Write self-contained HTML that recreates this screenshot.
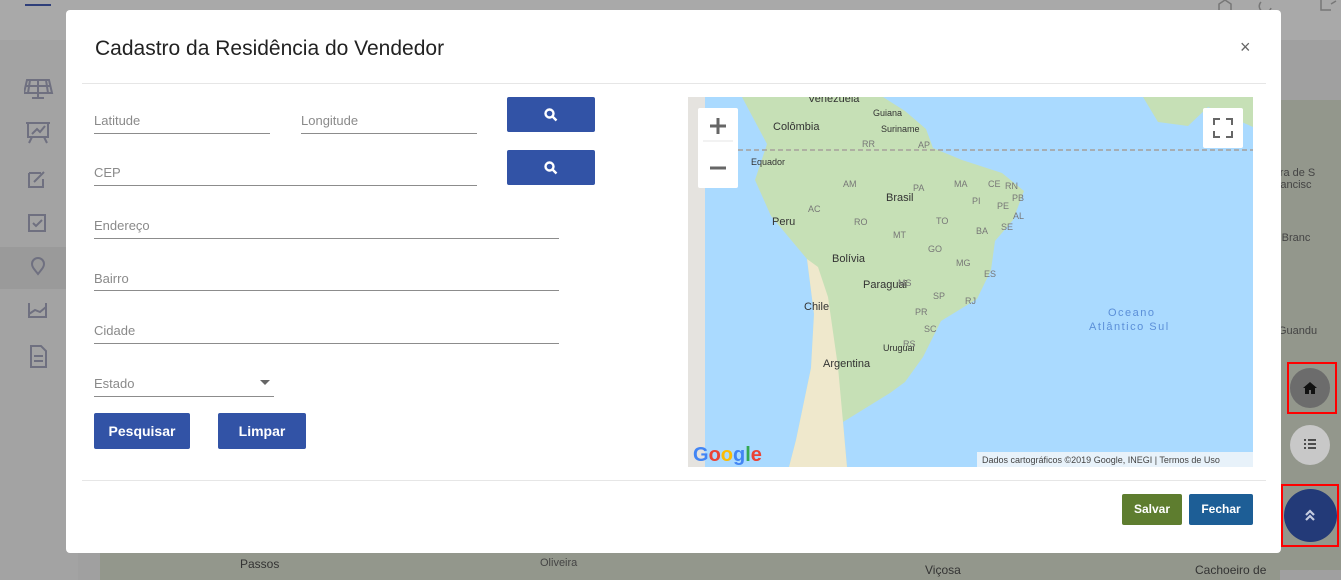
<!DOCTYPE html>
<html><head><meta charset="utf-8"><style>
*{box-sizing:border-box;margin:0;padding:0}
body{width:1341px;height:580px;overflow:hidden;position:relative;background:#a3a3a3;font-family:"Liberation Sans",sans-serif}
.abs{position:absolute}
.top{left:0;top:0;width:1341px;height:40px;background:#a9a9a9}
.lbl{position:absolute;font-size:13px;color:#8a8a8a}
.line{position:absolute;height:1px;background:#8c8c8c}
.sb{position:absolute;background:#3253a6;border-radius:2px}
.btn{position:absolute;color:#fff;font-weight:bold;font-size:14px;text-align:center;border-radius:2px}
</style></head><body>
<div class="abs top"></div>
<div class="abs" style="left:25px;top:4px;width:26px;height:2px;background:#2f3f7a"></div>
<svg class="abs" style="left:1215px;top:0" width="126" height="14" fill="none" stroke="#777" stroke-width="1.5"><path d="M4 12V4l6-4 6 4v8M46 2a6 6 0 1 0 10 6M106 0v10h10M116 4l5-3"/></svg>
<div class="abs" style="left:0;top:247px;width:78px;height:42px;background:#9a9a9a"></div>
<div class="abs" style="left:78px;top:40px;width:1263px;height:540px;background:#a0a0a0"></div>
<div class="abs" style="left:1240px;top:55px;width:30px;height:470px;background:#9c9c9c"></div>
<div class="abs" style="left:1262px;top:100px;width:79px;height:470px;background:#93978c"></div>
<div class="abs" style="left:100px;top:553px;width:1180px;height:27px;background:#93978c"></div>
<div class="abs" style="left:240px;top:557px;font-size:12px;color:#333">Passos</div>
<div class="abs" style="left:540px;top:557px;font-size:11px;color:#444">Oliveira</div>
<div class="abs" style="left:925px;top:563px;font-size:12px;color:#333">Viçosa</div>
<div class="abs" style="left:1195px;top:563px;font-size:12px;color:#333">Cachoeiro de</div>
<div class="abs" style="left:1270px;top:167px;font-size:11px;color:#444;line-height:12px">arra de S<br>Francisc</div>
<div class="abs" style="left:1270px;top:232px;font-size:11px;color:#444">ia Branc</div>
<div class="abs" style="left:1278px;top:325px;font-size:11px;color:#444">Guandu</div>
<svg class="abs" style="left:24px;top:78px" width="30" height="300" fill="none" stroke="#6f7080" stroke-width="2">
<path d="M3 2h22l3 13H0z M6 2l-2 13 M14 2v13 M22 2l2 13 M1 8h26 M14 15v4 M8 20h12"/>
<path d="M4 45h20v14H4z M2 45h24 M8 59l-3 6 M20 59l3 6 M8 56l5-5 3 3 5-6"/>
<path d="M5 95h12 M5 95v14h14v-8 M10 104l10-10"/>
<path d="M5 137h16v16H5z M9 145l3 3 6-6"/>
<path d="M14 196c-4-5-6-7-6-10a6 6 0 0 1 12 0c0 3-2 5-6 10z"/>
<path d="M5 225v14h17v-14 M5 236l6-4 5 2 6-5"/>
<path d="M7 268h10l5 5v16H7z M10 278h9 M10 283h9"/>
</svg>
<div class="abs" style="left:66px;top:10px;width:1215px;height:543px;background:#fff;border-radius:4px"></div>
<div class="abs" style="left:95px;top:37px;font-size:21px;color:#222">Cadastro da Residência do Vendedor</div>
<div class="abs" style="left:1240px;top:37px;font-size:18px;color:#666">×</div>
<div class="abs" style="left:82px;top:83px;width:1184px;height:1px;background:#e6e6e6"></div>
<div class="abs" style="left:82px;top:480px;width:1184px;height:1px;background:#e6e6e6"></div>
<div class="lbl" style="left:94px;top:113px">Latitude</div><div class="line" style="left:94px;top:133px;width:176px"></div>
<div class="lbl" style="left:301px;top:113px">Longitude</div><div class="line" style="left:301px;top:133px;width:176px"></div>
<div class="lbl" style="left:94px;top:165px">CEP</div><div class="line" style="left:94px;top:185px;width:383px"></div>
<div class="lbl" style="left:94px;top:218px">Endereço</div><div class="line" style="left:94px;top:238px;width:465px"></div>
<div class="lbl" style="left:94px;top:271px">Bairro</div><div class="line" style="left:94px;top:290px;width:465px"></div>
<div class="lbl" style="left:94px;top:323px">Cidade</div><div class="line" style="left:94px;top:343px;width:465px"></div>
<div class="lbl" style="left:94px;top:376px">Estado</div><div class="line" style="left:94px;top:396px;width:180px"></div>
<div class="abs" style="left:260px;top:380px;border-left:5px solid transparent;border-right:5px solid transparent;border-top:5px solid #666"></div>
<div class="sb" style="left:507px;top:97px;width:88px;height:35px"></div>
<div class="sb" style="left:507px;top:150px;width:88px;height:35px"></div>
<svg class="abs" style="left:544px;top:108px" width="14" height="14" fill="none" stroke="#fff" stroke-width="2.4"><circle cx="5.5" cy="5.5" r="4"/><path d="M8.5 8.5l4 4"/></svg>
<svg class="abs" style="left:544px;top:161px" width="14" height="14" fill="none" stroke="#fff" stroke-width="2.4"><circle cx="5.5" cy="5.5" r="4"/><path d="M8.5 8.5l4 4"/></svg>
<div class="btn" style="left:94px;top:413px;width:96px;height:36px;line-height:36px;background:#3253a6">Pesquisar</div>
<div class="btn" style="left:218px;top:413px;width:88px;height:36px;line-height:36px;background:#3253a6">Limpar</div>
<div class="btn" style="left:1122px;top:494px;width:60px;height:31px;line-height:31px;background:#5e7d2f;font-size:12px">Salvar</div>
<div class="btn" style="left:1189px;top:494px;width:64px;height:31px;line-height:31px;background:#1d5e96;font-size:12px">Fechar</div>
<svg class="abs" style="left:688px;top:97px" width="565" height="370" font-family="Liberation Sans,sans-serif">
<rect width="565" height="370" fill="#aadaff"/>
<rect width="17" height="370" fill="#e5e3df"/>
<path d="M54 0L79 47 67 83 83 119 119 162 126 217 123 271 108 343 101 370 159 370 155 325 202 296 217 285 235 260 253 224 289 202 303 173 307 144 325 123 336 94 314 76 274 63 245 51 238 32 217 14 195 0z" fill="#c6e0b6"/>
<path d="M119 162L126 217 123 271 108 343 101 370 159 370 155 325 150 270 140 200 130 170z" fill="#efe8cc"/>
<path d="M455 0L470 25 500 29 520 10 565 30 565 0z" fill="#c6e0b6"/>
<path d="M50 53H565" stroke="#a59f9b" stroke-width="1.5" stroke-dasharray="5 3"/>
<g fill="#333" font-size="11"><text x="85" y="33">Colômbia</text><text x="63" y="68" font-size="9">Equador</text><text x="84" y="128">Peru</text><text x="198" y="104">Brasil</text><text x="144" y="165">Bolívia</text><text x="175" y="191">Paraguai</text><text x="116" y="213">Chile</text><text x="135" y="270">Argentina</text><text x="195" y="254" font-size="9">Uruguai</text><text x="185" y="19" font-size="9">Guiana</text><text x="193" y="35" font-size="9">Suriname</text><text x="120" y="5">Venezuela</text></g>
<g fill="#777" font-size="9"><text x="155" y="90">AM</text><text x="225" y="94">PA</text><text x="266" y="90">MA</text><text x="300" y="90">CE</text><text x="317" y="92">RN</text><text x="324" y="104">PB</text><text x="309" y="112">PE</text><text x="325" y="122">AL</text><text x="313" y="133">SE</text><text x="284" y="107">PI</text><text x="248" y="127">TO</text><text x="288" y="137">BA</text><text x="240" y="155">GO</text><text x="268" y="169">MG</text><text x="296" y="180">ES</text><text x="210" y="189">MS</text><text x="245" y="202">SP</text><text x="277" y="207">RJ</text><text x="227" y="218">PR</text><text x="236" y="235">SC</text><text x="215" y="250">RS</text><text x="120" y="115">AC</text><text x="166" y="128">RO</text><text x="205" y="141">MT</text><text x="174" y="50">RR</text><text x="230" y="51">AP</text></g>
<g fill="#5b8fd8" font-size="11" letter-spacing="1.5"><text x="420" y="219">Oceano</text><text x="401" y="233">Atlântico Sul</text></g>
<rect x="10" y="11" width="40" height="80" rx="2" fill="#fff"/><path d="M15 44h30" stroke="#e6e6e6"/>
<path d="M30 21v16M22 29h16M22 71h16" stroke="#666" stroke-width="3"/>
<rect x="515" y="11" width="40" height="40" rx="2" fill="#fff"/>
<path d="M526 28v-6h6M538 22h6v6M544 34v6h-6M532 40h-6v-6" stroke="#666" stroke-width="2" fill="none"/>
<text x="5" y="364" font-size="20" font-weight="bold" fill="#4285f4">G<tspan fill="#ea4335">o</tspan><tspan fill="#fbbc05">o</tspan><tspan fill="#4285f4">g</tspan><tspan fill="#34a853">l</tspan><tspan fill="#ea4335">e</tspan></text>
<rect x="289" y="355" width="276" height="15" fill="#e8f2fa"/>
<text x="294" y="366" font-size="9" fill="#444">Dados cartográficos ©2019 Google, INEGI   |   Termos de Uso</text>
</svg>
<div class="abs" style="left:1290px;top:368px;width:40px;height:40px;border-radius:50%;background:#6c6c6c"></div>
<svg class="abs" style="left:1302px;top:381px" width="16" height="14"><path d="M8 1L1 7h2v6h4v-4h2v4h4V7h2z" fill="#111"/></svg>
<div class="abs" style="left:1287px;top:362px;width:50px;height:52px;border:2px solid #f00"></div>
<div class="abs" style="left:1290px;top:425px;width:40px;height:40px;border-radius:50%;background:#c8c8c8"></div>
<svg class="abs" style="left:1303px;top:438px" width="14" height="13" stroke="#222" stroke-width="1.5"><path d="M1 2h2M5 2h8M1 6h2M5 6h8M1 10h2M5 10h8"/></svg>
<div class="abs" style="left:1284px;top:489px;width:53px;height:53px;border-radius:50%;background:#233a78"></div>
<svg class="abs" style="left:1303px;top:508px" width="14" height="14" fill="none" stroke="#c5cce0" stroke-width="2.2"><path d="M3 7l4-4 4 4M3 12l4-4 4 4"/></svg>
<div class="abs" style="left:1281px;top:484px;width:58px;height:63px;border:2px solid #f00"></div>
</body></html>
